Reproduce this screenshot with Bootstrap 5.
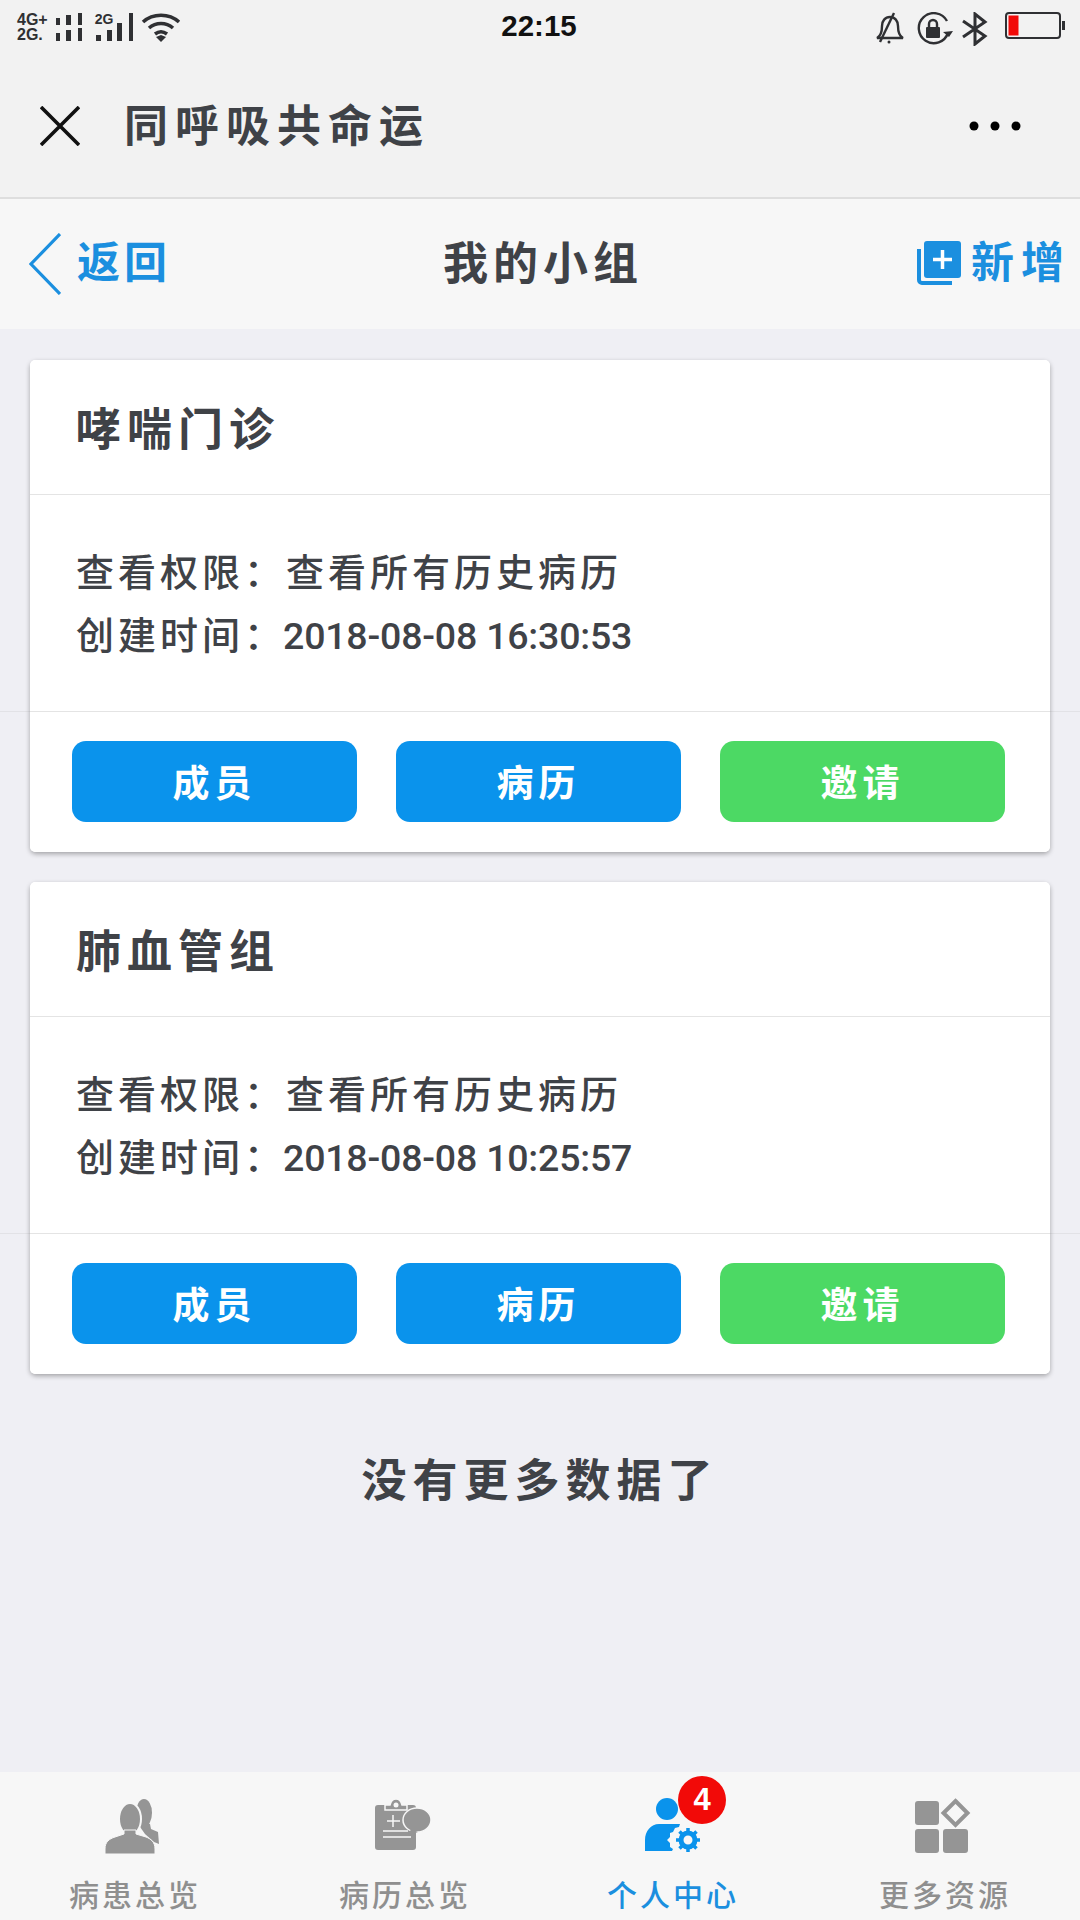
<!DOCTYPE html>
<html lang="zh-CN">
<head>
  <meta charset="UTF-8">
  <title>我的小组</title>
  <link href="https://cdn.jsdelivr.net/npm/bootstrap@5.3.2/dist/css/bootstrap.min.css" rel="stylesheet">
  <style>
    html,body{margin:0;width:1080px;height:1920px;overflow:hidden}
    body{background:#efeff4;color:#3f4247;font-family:"Noto Sans CJK SC","Liberation Sans",sans-serif}
    .page-wrap{height:1920px}
    .top-head{height:199px;background:#f2f2f2;border-bottom:2px solid #dedede}
    .status-row{height:54px;padding:12px 14px 0 17px}
    .net-label{font:700 16px/15px "Liberation Sans",sans-serif;color:#2f3033}
    .net-small{position:absolute;left:0;top:0;font-size:14px;line-height:14px}
    .signal-one{margin-left:8px}
    .signal-two{position:relative;width:40px;height:30px;margin-left:12px}
    .signal-two svg{display:block}
    .wifi-ico{margin-left:6px;margin-top:1px}
    .bell-ico{margin-right:2px}
    .clock{font:700 29.500px/30px "Liberation Sans",sans-serif;color:#111;position:absolute;left:0;right:2px;top:11px;text-align:center}
    .title-row{height:143px;padding:0 59px 0 40px}
    .app-title{font-size:44px;font-weight:700;letter-spacing:7px;line-height:1;margin-left:44px;padding-bottom:5px}
    .sub-head{height:130px;background:#f7f7f7;padding:0 9px 0 29px}
    .sub-title{font-size:45px;font-weight:700;letter-spacing:5px;line-height:1;left:0;right:0;top:39px;text-align:center;padding-left:6px}
    .blue-link{color:#1b8fdf;font-size:43px;font-weight:700;letter-spacing:4px;line-height:1;text-decoration:none}
    .link-text{padding-bottom:9px}
    .link-wide{letter-spacing:7px}
    .add-ico{margin-right:10px;margin-bottom:2px}
    .group-list{padding:31px 30px 0;gap:30px}
    .group-item{position:relative}
    .group-item::before{content:"";position:absolute;left:-30px;right:-30px;top:351px;height:1px;background:#e2e2e6}
    .group-card{position:relative;height:492px;border:0;border-radius:6px;box-shadow:0 2px 5px rgba(0,0,0,.32)}
    .group-card .card-header{height:135px;background:#fff;border-bottom:1px solid #e4e4e4;padding:0 0 0 46px;font-size:45px;font-weight:700;letter-spacing:6px}
    .group-card .card-body{height:216px;flex:none;padding:0 0 0 46px;font-size:38px;line-height:63px;font-weight:500}
    .spaced{letter-spacing:4px}
    .date-text{font-family:Roboto,"Liberation Sans",sans-serif;font-size:37.500px;letter-spacing:-.2px;font-weight:500;margin-left:-3px}
    .group-card .card-footer{height:141px;background:#fff;border-top:1px solid #e4e4e4;padding:29px 45px 0 42px;gap:39px}
    .act-btn{width:285px;height:81px;border:0;border-radius:14px;color:#fff;font-size:37px;font-weight:700;letter-spacing:5px;line-height:81px;padding:0}
    .act-blue{background:#0a93ec}
    .act-green{background:#4cd964}
    .act-btn:hover{color:#fff}
    .end-note{font-size:45px;font-weight:700;letter-spacing:6px;line-height:1;margin-top:81px}
    .tab-bar{height:148px;background:#f7f7f7;margin-top:auto}
    .tab-item{width:270px;padding-top:26px;color:#8f8f8f;font-size:30px;font-weight:500;letter-spacing:3px;line-height:1;text-decoration:none}
    .tab-item svg{display:block;margin:0 4px 22px 0}
    .tab-on{color:#1b8fdf}
    .tab-on-text{padding-right:4px}
    .tab-count{position:absolute;left:138px;top:4px;width:48px;height:48px;background:#f20a08;color:#fff;font:700 31px/48px "Liberation Sans",sans-serif;letter-spacing:0;text-align:center;border-radius:50%}
  </style>
</head>
<body>
<div class="page-wrap d-flex flex-column">

  <!-- шапка -->
  <div class="top-head position-relative">
    <div class="status-row d-flex align-items-start justify-content-between">
      <div class="d-flex align-items-start">
        <div class="net-label"><div>4G+</div><div>2G.</div></div>
        <svg class="signal-one" width="27" height="30" viewBox="0 0 27 30" fill="#2f3033"><rect x="0" y="6" width="4" height="7"/><rect x="10" y="3" width="5" height="10"/><rect x="22" y="1" width="4" height="12"/><rect x="0" y="21" width="4" height="8"/><rect x="10" y="18" width="5" height="11"/><rect x="22" y="16" width="4" height="13"/></svg>
        <div class="signal-two">
          <svg width="40" height="30" viewBox="0 0 40 30" fill="#2f3033"><rect x="1" y="23" width="5" height="6"/><rect x="12" y="18" width="5" height="11"/><rect x="22" y="11" width="5" height="18"/><rect x="34" y="1" width="4" height="28"/></svg>
          <div class="net-label net-small">2G</div>
        </div>
        <svg class="wifi-ico" width="40" height="30" viewBox="0 0 40 30" fill="none" stroke="#2f3033" stroke-width="3.600"><path d="M2 9C12 0 28 0 38 9"/><path d="M8 15c7-6 17-6 24 0"/><path d="M14 21c4-3 8-3 12 0"/><path d="M15 24l5 5 5-5-5-2z" fill="#2f3033" stroke="none"/></svg>
      </div>
      <div class="clock">22:15</div>
      <div class="d-flex align-items-start">
        <svg class="bell-ico" width="30" height="32" viewBox="0 0 30 32" fill="none" stroke="#2f3033" stroke-width="2.400"><path d="M2 26c4-2 5-7 5-12 0-5 3-9 8-9s8 4 8 9c0 5 1 10 5 12z"/><path d="M5 30L19 1"/><circle cx="14" cy="30" r="1.500" fill="#2f3033" stroke="none"/></svg>
        <svg class="ms-2" width="38" height="34" viewBox="0 0 38 34" fill="none" stroke="#2f3033" stroke-width="2.400"><path d="M33 21a15 15 0 1 1-1-12"/><path d="M28 20l6 5 4-6" fill="#2f3033" stroke="none"/><rect x="11" y="15" width="14" height="11" rx="1" fill="#2f3033" stroke="none"/><path d="M14 15v-3a4 4 0 0 1 8 0v3"/></svg>
        <svg class="ms-2" width="28" height="34" viewBox="0 0 28 34" fill="none" stroke="#2f3033" stroke-width="3"><path d="M2 9l22 15-10 8V2l10 8L2 25"/></svg>
        <svg class="ms-3" width="61" height="28" viewBox="0 0 61 28"><rect x="1" y="1" width="54" height="25" rx="3" fill="none" stroke="#2f3033" stroke-width="2"/><rect x="3.500" y="3.500" width="10" height="20" fill="#f20a08"/><rect x="57" y="9" width="3" height="9" fill="#2f3033"/></svg>
      </div>
    </div>
    <div class="title-row d-flex align-items-center justify-content-between">
      <div class="d-flex align-items-center">
        <svg width="40" height="40" viewBox="0 0 40 40" stroke="#111" stroke-width="3.600" fill="none"><path d="M1 1l38 38M39 1L1 39"/></svg>
        <span class="app-title">同呼吸共命运</span>
      </div>
      <svg width="52" height="10" viewBox="0 0 52 10" fill="#000"><circle cx="5" cy="5" r="4.500"/><circle cx="26" cy="5" r="4.500"/><circle cx="47" cy="5" r="4.500"/></svg>
    </div>
  </div>

  <div class="sub-head position-relative d-flex align-items-center justify-content-between">
    <a class="blue-link d-flex align-items-center" href="#">
      <svg class="me-3" width="32" height="62" viewBox="0 0 32 62" fill="none" stroke="#1b8fdf" stroke-width="3.200"><path d="M31 1L2 31l29 30"/></svg>
      <span class="link-text">返回</span>
    </a>
    <div class="sub-title position-absolute">我的小组</div>
    <a class="blue-link d-flex align-items-center" href="#">
      <svg class="add-ico" width="44" height="44" viewBox="0 0 44 44"><path d="M2 8v31a3 3 0 0 0 3 3h30" fill="none" stroke="#1b8fdf" stroke-width="4"/><rect x="7" y="0" width="37" height="37" rx="3" fill="#1b8fdf"/><path d="M25.500 9v19M16 18.500h19" stroke="#fff" stroke-width="3.500"/></svg>
      <span class="link-text link-wide">新增</span>
    </a>
  </div>

  <!-- группы -->
  <div class="group-list d-flex flex-column">
    <div class="group-item">
      <div class="card group-card">
        <div class="card-header d-flex align-items-center">哮喘门诊</div>
        <div class="card-body d-flex flex-column justify-content-center">
          <div><span class="spaced">查看权限：</span><span class="spaced">查看所有历史病历</span></div>
          <div><span class="spaced">创建时间：</span><span class="date-text">2018-08-08 16:30:53</span></div>
        </div>
        <div class="card-footer d-flex">
          <button class="btn act-btn act-blue">成员</button>
          <button class="btn act-btn act-blue">病历</button>
          <button class="btn act-btn act-green">邀请</button>
        </div>
      </div>
    </div>
    <div class="group-item">
      <div class="card group-card">
        <div class="card-header d-flex align-items-center">肺血管组</div>
        <div class="card-body d-flex flex-column justify-content-center">
          <div><span class="spaced">查看权限：</span><span class="spaced">查看所有历史病历</span></div>
          <div><span class="spaced">创建时间：</span><span class="date-text">2018-08-08 10:25:57</span></div>
        </div>
        <div class="card-footer d-flex">
          <button class="btn act-btn act-blue">成员</button>
          <button class="btn act-btn act-blue">病历</button>
          <button class="btn act-btn act-green">邀请</button>
        </div>
      </div>
    </div>
  </div>

  <div class="end-note text-center">没有更多数据了</div>

  <!-- нижнее меню -->
  <div class="tab-bar d-flex">
    <a class="tab-item d-flex flex-column align-items-center" href="#">
      <svg width="56" height="58" viewBox="0 0 56 58" fill="#959595">
        <ellipse cx="39" cy="15" rx="8" ry="14"/>
        <path d="M33 26h12l1 5 7 3 1 12-5-2-9-8z"/>
        <ellipse cx="25" cy="21" rx="11" ry="16" stroke="#f7f7f7" stroke-width="2"/>
        <path d="M0 56v-5c0-7 4-10 10-12l9-3 0-4h12l0 4 10 3c5 2 9 5 9 12v5z" stroke="#f7f7f7" stroke-width="1"/>
      </svg>
      <span>病患总览</span>
    </a>
    <a class="tab-item d-flex flex-column align-items-center" href="#">
      <svg width="56" height="58" viewBox="0 0 56 58" fill="#959595">
        <rect x="0" y="7" width="41" height="45" rx="3"/>
        <path d="M10 12V7h5c1-4 3-6 6-6s5 2 6 6h5v5z" stroke="#f7f7f7" stroke-width="1.500"/>
        <circle cx="21" cy="7" r="2.500" fill="#f7f7f7"/>
        <ellipse cx="42" cy="22" rx="14" ry="12" stroke="#f7f7f7" stroke-width="1.500"/>
        <path d="M36 31l-3 7 10-4z"/>
        <path d="M18 17v12M12 23h13M8 33h25M8 39h28" stroke="#f7f7f7" stroke-width="1.500" fill="none"/>
      </svg>
      <span>病历总览</span>
    </a>
    <a class="tab-item tab-on d-flex flex-column align-items-center position-relative" href="#">
      <svg width="56" height="58" viewBox="0 0 56 58" fill="#0a93ec">
        <circle cx="22" cy="11" r="11"/>
        <path d="M0 53V42c0-9 6-16 14-16h21l-1 3-4 1-2 4-3 1v4l-3 3 3 3v4l3 2-1 2z"/>
        <circle cx="43" cy="42" r="7" fill="none" stroke="#0a93ec" stroke-width="5"/>
        <path d="M43 30v5M43 49v5M31 42h5M50 42h5M34.500 33.500l3 3M48.500 47.500l3 3M51.500 33.500l-3 3M37.500 47.500l-3 3" stroke="#0a93ec" stroke-width="3.500"/>
      </svg>
      <span class="tab-on-text">个人中心</span>
      <span class="tab-count">4</span>
    </a>
    <a class="tab-item d-flex flex-column align-items-center" href="#">
      <svg width="56" height="58" viewBox="0 0 56 58" fill="#959595"><rect x="0" y="3" width="24" height="24" rx="3"/><rect x="0" y="31" width="24" height="24" rx="3"/><rect x="28" y="31" width="25" height="24" rx="3"/><path d="M40.500 3l12 12-12 12-12-12z" fill="none" stroke="#959595" stroke-width="4"/></svg>
      <span>更多资源</span>
    </a>
  </div>
</div>
<script src="https://cdn.jsdelivr.net/npm/bootstrap@5.3.2/dist/js/bootstrap.bundle.min.js"></script>
</body>
</html>
